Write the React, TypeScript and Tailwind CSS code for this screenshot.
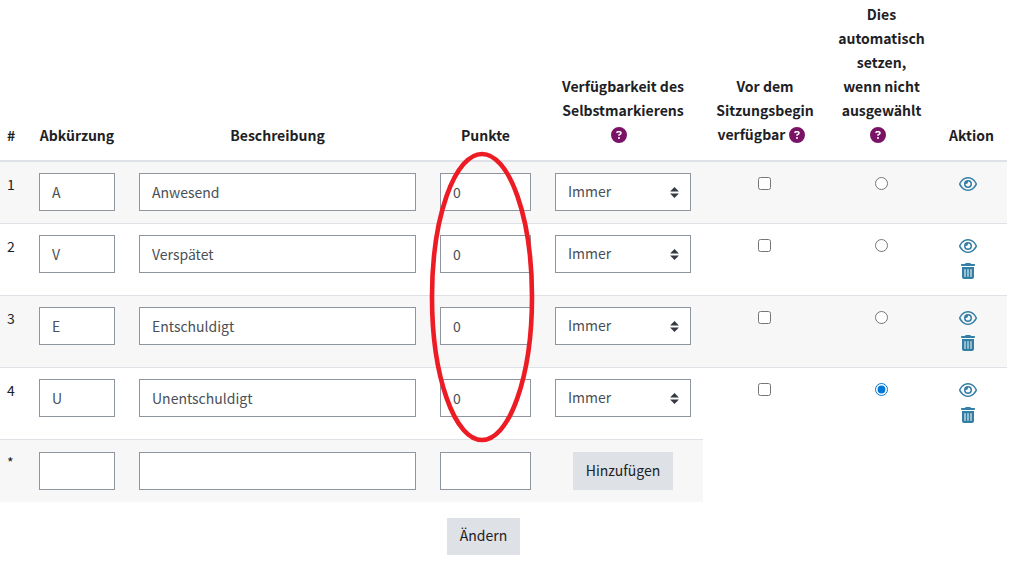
import { useState } from "react";
import type { InputHTMLAttributes, ReactNode } from "react";
import { FaCircleQuestion, FaRegEye, FaTrashCan } from "react-icons/fa6";

type Status = {
  id: number;
  acronym: string;
  description: string;
  grade: string;
  removable: boolean;
};

const STATUSES: Status[] = [
  { id: 1, acronym: "A", description: "Anwesend", grade: "0", removable: false },
  { id: 2, acronym: "V", description: "Verspätet", grade: "0", removable: true },
  { id: 3, acronym: "E", description: "Entschuldigt", grade: "0", removable: true },
  { id: 4, acronym: "U", description: "Unentschuldigt", grade: "0", removable: true },
];

function Head({ children }: { children: ReactNode }) {
  return (
    <th scope="col" className="px-3 pb-[13px] text-center align-bottom font-bold">
      {children}
    </th>
  );
}

// Headings that end in a help icon sit slightly higher than the plain ones
function HelpHead({ children }: { children: ReactNode }) {
  return (
    <th scope="col" className="px-[11px] pt-0.5 pb-3.5 text-center align-bottom font-bold">
      {children}
    </th>
  );
}

function Help({ topic }: { topic: string }) {
  return (
    <button type="button" aria-label={`Hilfe zu ${topic}`} className="mr-2 inline-block align-[-3px] text-[#7a1365]">
      <FaCircleQuestion className="size-4" />
    </button>
  );
}

function TextField(props: InputHTMLAttributes<HTMLInputElement>) {
  return (
    <input
      type="text"
      className="block h-[38px] w-full border border-[#8f959e] bg-white px-3 text-[#495057]"
      {...props}
    />
  );
}

function AvailabilitySelect({ label }: { label: string }) {
  return (
    <div className="relative">
      <select
        aria-label={label}
        defaultValue="always"
        className="block h-[38px] w-full appearance-none border border-[#8f959e] bg-white px-3 pb-0.5 text-[#495057]"
      >
        <option value="never">Nie</option>
        <option value="always">Immer</option>
      </select>
      <svg
        aria-hidden
        viewBox="0 0 4 5"
        className="pointer-events-none absolute top-[14px] right-3 h-[11px] w-[9px] fill-[#343a40]"
      >
        <path d="M2 0L0 2h4zm0 5L0 3h4z" />
      </svg>
    </div>
  );
}

// Red marker drawn around the whole points column
function PointsMarker() {
  return (
    <svg
      aria-hidden
      viewBox="0 0 106 292"
      className="pointer-events-none absolute -top-[11px] left-px z-10 h-[292px] w-[106px]"
    >
      <ellipse cx="53" cy="146" rx="50" ry="143" fill="none" stroke="#ed1c24" strokeWidth="4.6" />
    </svg>
  );
}

export default function App() {
  const [fallback, setFallback] = useState(4);

  return (
    <form
      onSubmit={(e) => e.preventDefault()}
      className="bg-white pr-[17px] font-['Noto_Sans_CJK_SC',sans-serif] text-sm leading-6 text-[#1d2125]"
    >
      <table className="w-full table-fixed border-collapse">
        <colgroup>
          <col className="w-[27px]" />
          <col className="w-[100px]" />
          <col />
          <col className="w-[115px]" />
          <col className="w-[160px]" />
          <col className="w-[124px]" />
          <col className="w-[109px]" />
          <col className="w-[71px]" />
        </colgroup>
        <thead>
          <tr className="border-b-2 border-[#dee2e6]">
            <th scope="col" className="pb-[13px] pl-[7px] text-left align-bottom font-bold">
              #
            </th>
            <Head>Abkürzung</Head>
            <Head>Beschreibung</Head>
            <Head>Punkte</Head>
            <HelpHead>
              Verfügbarkeit des Selbstmarkierens <Help topic="Verfügbarkeit des Selbstmarkierens" />
            </HelpHead>
            <HelpHead>
              Vor dem
              <br />
              Sitzungsbegin
              <br />
              <span className="whitespace-nowrap">
                verfügbar <Help topic="Vor dem Sitzungsbegin verfügbar" />
              </span>
            </HelpHead>
            <HelpHead>
              Dies automatisch setzen,
              <br />
              wenn nicht ausgewählt <Help topic="Dies automatisch setzen" />
            </HelpHead>
            <Head>Aktion</Head>
          </tr>
        </thead>
        <tbody>
          {STATUSES.map((status, i) => (
            <tr key={status.id} className="border-t border-[#dee2e6] align-top odd:bg-[#f7f7f7]">
              <td className="pt-2.5 pl-[7px]">{status.id}</td>
              <td className="p-3 pt-[11px]">
                <TextField aria-label={`Abkürzung ${status.id}`} defaultValue={status.acronym} />
              </td>
              <td className="p-3 pt-[11px]">
                <TextField aria-label={`Beschreibung ${status.id}`} defaultValue={status.description} />
              </td>
              <td className="relative p-3 pt-[11px]">
                <TextField aria-label={`Punkte ${status.id}`} defaultValue={status.grade} />
                {i === 0 && <PointsMarker />}
              </td>
              <td className="p-3 pt-[11px]">
                <AvailabilitySelect label={`Verfügbarkeit ${status.id}`} />
              </td>
              <td className="pt-[15px] pr-px">
                <input
                  type="checkbox"
                  aria-label={`Vor dem Sitzungsbeginn verfügbar ${status.id}`}
                  className="mx-auto block size-[13px]"
                />
              </td>
              <td className="pt-[15px]">
                <input
                  type="radio"
                  name="fallback"
                  aria-label={`Automatisch setzen ${status.id}`}
                  checked={fallback === status.id}
                  onChange={() => setFallback(status.id)}
                  className="mx-auto block size-[13px] accent-[#0078d7]"
                />
              </td>
              <td className="pt-2.5 pr-2 pb-3">
                <div className="flex flex-col items-center text-[#337ea5]">
                  <a href="#hide" aria-label="Verbergen" className="flex h-6 items-center">
                    <FaRegEye className="h-4 w-[18px]" />
                  </a>
                  {status.removable && (
                    <a href="#delete" aria-label="Löschen" className="flex h-[25px] items-center">
                      <FaTrashCan className="size-4" />
                    </a>
                  )}
                </div>
              </td>
            </tr>
          ))}
          <tr className="align-top">
            <td className="border-t border-[#dee2e6] bg-[#f7f7f7] pt-2.5 pl-[7px]">*</td>
            <td className="border-t border-[#dee2e6] bg-[#f7f7f7] p-3">
              <TextField aria-label="Neue Abkürzung" />
            </td>
            <td className="border-t border-[#dee2e6] bg-[#f7f7f7] p-3">
              <TextField aria-label="Neue Beschreibung" />
            </td>
            <td className="border-t border-[#dee2e6] bg-[#f7f7f7] p-3">
              <TextField aria-label="Neue Punkte" />
            </td>
            <td className="border-t border-[#dee2e6] bg-[#f7f7f7] p-3 text-center">
              <button type="button" className="h-[38px] bg-[#dee2e6] px-[13px] pb-0.5">
                Hinzufügen
              </button>
            </td>
            <td colSpan={3} />
          </tr>
          <tr>
            <td colSpan={3} />
            <td className="pt-4 pr-1 text-center">
              <button type="submit" className="h-[37px] bg-[#dee2e6] px-[13px] pb-0.5">
                Ändern
              </button>
            </td>
            <td colSpan={4} />
          </tr>
        </tbody>
      </table>
    </form>
  );
}
